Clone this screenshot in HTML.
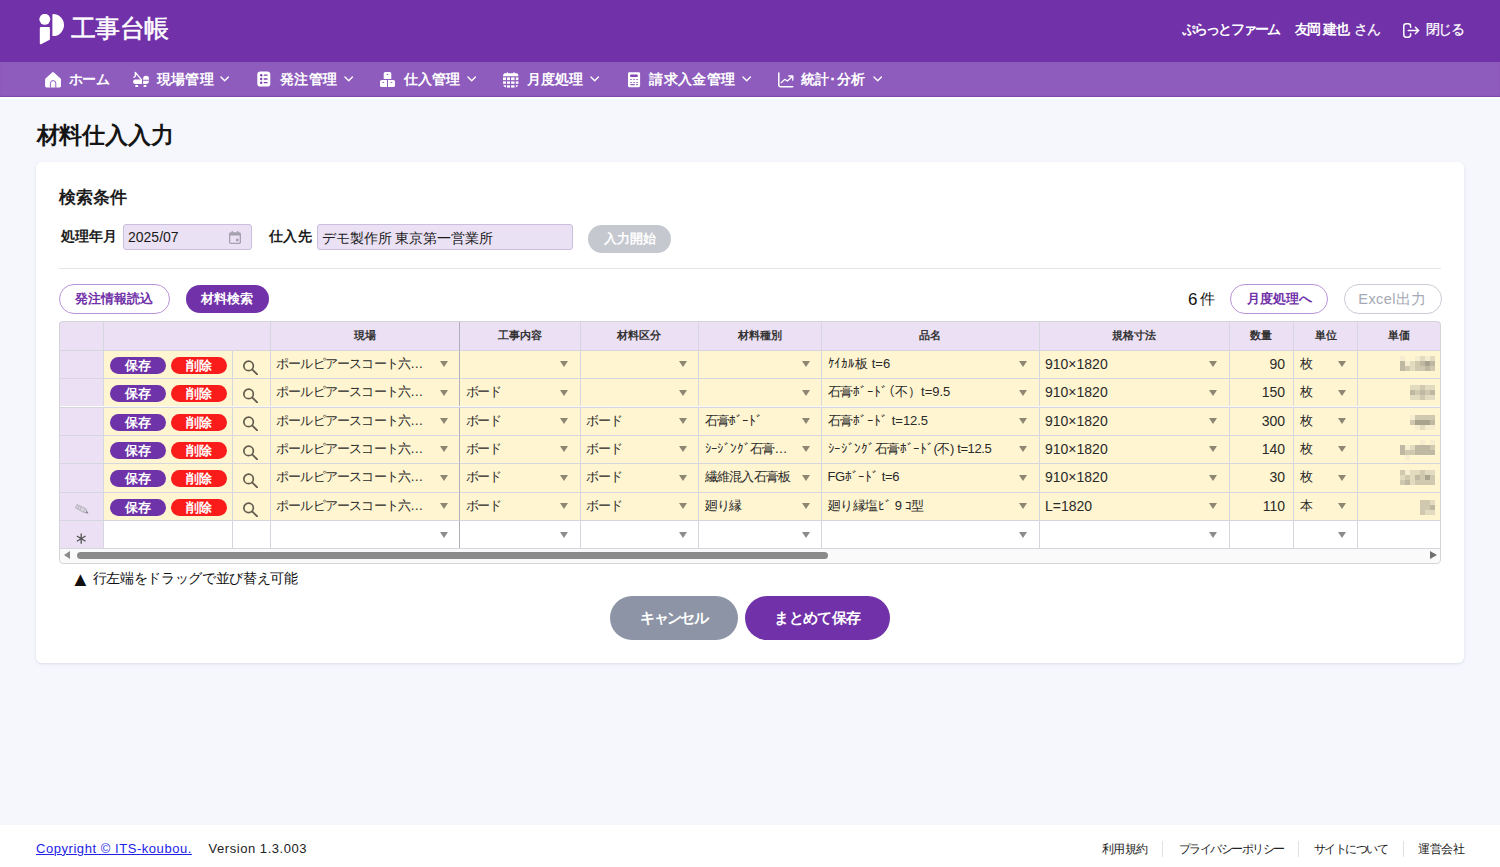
<!DOCTYPE html>
<html lang="ja">
<head>
<meta charset="utf-8">
<title>材料仕入入力</title>
<style>
*{box-sizing:border-box;margin:0;padding:0}
html,body{width:1500px;height:867px;overflow:hidden}
body{position:relative;background:#f5f7fc;color:#1a1a1a;font-family:"Liberation Sans",sans-serif;font-size:14px;line-height:1}
.abs{position:absolute;white-space:nowrap}
/* header */
#hdr{left:0;top:0;width:1500px;height:62px;background:#7131a9}
#logo{left:39px;top:14px;width:25px;height:31px}
#brand{left:70.5px;top:12.5px;width:98px;height:32px;line-height:32px;font-size:24.5px;font-weight:500;color:#fff;letter-spacing:-0.5px;-webkit-text-stroke:0.5px #fff}
.hr{color:#fff;font-size:13.5px;height:20px;line-height:20px;top:20px}
/* nav */
#nav{left:0;top:62px;width:1500px;height:34.6px;background:#8e5cbd;box-shadow:inset 0 -1.5px 1px -0.5px rgba(110,50,160,.55),0 1.6px 0 #fff}
.ni{top:62px;height:34px;line-height:34px;color:#fff;font-size:14px;font-weight:bold}
.j{text-align-last:justify}
.nic{top:71px;width:18px;height:18px}
.chev{top:75px;width:10px;height:8px}
/* page */
#ttl{left:36.5px;top:119px;width:137px;height:32px;line-height:32px;font-size:23px;font-weight:bold;color:#151515;letter-spacing:-0.4px}
#card{left:36px;top:162px;width:1428px;height:501px;background:#fff;border-radius:6px;box-shadow:0 1px 3px rgba(40,55,100,.13)}
#sec{left:59px;top:185px;width:68px;height:24px;line-height:24px;font-size:16.5px;font-weight:bold;color:#1c1c1c}
.lbl{top:224px;height:26px;line-height:25px;font-size:14px;font-weight:bold;color:#1c1c1c}
.inp{top:224px;height:26.2px;background:#ebe1f4;border:1px solid #cbbfdd;border-radius:3px;line-height:24px;font-size:14px;padding-left:4px;color:#1a1a1a}
.pill{border-radius:999px;text-align:center;font-weight:bold;font-size:14px}
#rule{left:59px;top:268px;width:1382px;height:1px;background:#e3e5ea}
/* grid */
#grid{left:59px;top:321px;width:1382px;height:242.6px;background:#fafafa;border-radius:4px;overflow:hidden}
#gb{position:absolute;left:0;top:0;right:0;bottom:0;border:1px solid #d3d3d8;border-radius:4px;pointer-events:none}
.row{position:absolute;left:0;width:1382px}
.c{position:absolute;top:0;height:100%;border-left:1px solid #d5d6de;border-top:1px solid #d5d6de;overflow:hidden;white-space:nowrap;font-size:14px;color:#1d1d1d}
.h .c{background:#ebe0f4;text-align:center;font-weight:bold;font-size:11px;color:#333;line-height:28px;border-top:0}
.d .c{background:#fff5d1;line-height:26px;padding-left:5.5px;color:#2a2a2a}
.d .c.rh,.n .c.rh{background:#ebe0f4;padding:0}
.n .c{background:#fff}
.c.fz+.c{border-left-color:#b0b0b8}
.num{text-align:right;padding-right:8px}
.t{display:inline-block;vertical-align:top}
.k{font-size:13px;letter-spacing:-0.7px}
.ks{font-size:13px;letter-spacing:-1.2px}
.kw{font-size:13px;letter-spacing:-0.8px}
.k2{font-size:13px;letter-spacing:-0.05px}
.k3{font-size:13px;letter-spacing:-0.4px}
.tri{position:absolute;right:11.2px;top:10.6px;width:0;height:0;border-left:4.5px solid transparent;border-right:4.5px solid transparent;border-top:6.2px solid #8d8672}
.n .tri{border-top-color:#8c8c8c}
.bs,.bd{position:absolute;top:6px;height:17px;line-height:17px;border-radius:9px;color:#fff;font-size:13px;font-weight:bold;text-align:center;width:56.5px}
.bs{left:6px;background:#6e33a8}
.bd{left:67.1px;background:#fa1b1b}
.mag{position:absolute;left:9.5px;top:8.9px;width:16px;height:15px}
.pen{position:absolute;left:14.5px;top:11.7px;width:14px;height:10px}
.ast{position:absolute;left:16.3px;top:11.5px;width:10.4px;height:11.3px}
.sb{background:#fafafa;border-top:1px solid #d5d6de}
.sl,.sr{position:absolute;top:2.6px;width:0;height:0;border-top:4.4px solid transparent;border-bottom:4.4px solid transparent}
.sl{left:4.5px;border-right:6.5px solid #8b8b8b}
.sr{right:4.5px;border-left:7px solid #707070}
.th{position:absolute;left:17.5px;top:3px;width:751px;height:7.5px;border-radius:4px;background:#8b8b8b}
.mz{position:absolute;right:6px;top:9px;height:13px;background:#cfc8b4;opacity:.8}
.m0{width:36px}.m1{width:26px}.m2{width:26px}.m3{width:36px}.m4{width:36px}.m5{width:16px}
/* footer */
#ftr{left:0;top:825px;width:1500px;height:42px;background:#fff}
.ft{top:840px;height:18px;line-height:18px;font-size:11.5px;color:#222}
.ft.j{letter-spacing:-0.6px}
.fs{top:841px;width:1px;height:16px;background:#dfe1e6}
</style>
</head>
<body>
<div id="hdr" class="abs"></div>
<svg id="logo" class="abs" viewBox="0 0 25 31"><g fill="#fff"><circle cx="5.8" cy="5.3" r="5.45"/><path d="M1.9 13.1H9.8a1.1 1.1 0 0 1 1.1 1.1V24.9a1.3 1.3 0 0 1-.7 1.1L2.5 30.1a1.1 1.1 0 0 1-1.7-.9V14.2a1.1 1.1 0 0 1 1.1-1.1Z"/><path d="M14 0.1A11 11 0 0 1 14 22.1a.6.6 0 0 1-.6-.6V.7a.6.6 0 0 1 .6-.6Z"/></g></svg>
<div id="brand" class="abs j">工事台帳</div>
<div class="abs hr j" style="left:1181.5px;width:98px;font-weight:bold;letter-spacing:-1.85px">ぷらっとファーム</div>
<div class="abs hr j" style="left:1294.5px;width:54px;font-weight:bold;letter-spacing:-1.6px">友岡 建也</div>
<div class="abs hr j" style="left:1353.5px;width:26px;letter-spacing:-0.6px;-webkit-text-stroke:.25px #fff">さん</div>
<svg class="abs" style="left:1402.6px;top:23px;width:17px;height:15px" viewBox="0 0 17 15" fill="none" stroke="#fff" stroke-width="1.5" stroke-linecap="round" stroke-linejoin="round"><path d="M7.6 4.2V3.2A2.4 2.4 0 0 0 5.2 .8H3.2A2.4 2.4 0 0 0 .8 3.2V11.8A2.4 2.4 0 0 0 3.2 14.2H5.2A2.4 2.4 0 0 0 7.6 11.8V10.8"/><path d="M5.2 7.5H15.6M12.4 4.3L15.6 7.5L12.4 10.7"/></svg>
<div class="abs hr j" style="left:1425.5px;width:38px;letter-spacing:-1.1px;-webkit-text-stroke:.25px #fff">閉じる</div>
<div id="nav" class="abs"></div>
<svg class="abs" style="left:44px;top:71px;width:18px;height:17px" viewBox="0 0 18 17"><path fill="#fff" stroke="#fff" stroke-width="2.6" stroke-linejoin="round" d="M9 2.4L15.7 8.5V15.1H2.4V8.5Z"/><path fill="none" stroke="#8e5cbd" stroke-width="1" d="M6.4 16.6V12.3a2.7 2.7 0 0 1 5.4 0V16.6"/></svg>
<div class="abs ni j" style="left:68.5px;width:40.5px;letter-spacing:-0.9px">ホーム</div>
<svg class="abs" style="left:133px;top:71px;width:17px;height:17px" viewBox="0 0 17 17"><g fill="none" stroke="#fff" stroke-width="1.3" stroke-linecap="round" stroke-linejoin="round"><path d="M.9 6.3L2.4 5.2L2.3 1.3L8.6 8.8"/></g><g fill="#fff"><path d="M2.3 8.5H9V13H2.3A2.2 2.2 0 0 1 2.3 8.5Z"/><path d="M10.1 8.7V7.7A2.950 2.950 0 0 1 16 7.7V8.7Z"/><path d="M10.1 9.8H16V10.1A2.950 2.950 0 0 1 13 13H10.1Z"/><rect x="2.2" y="14.1" width="3" height="2" rx=".9"/><rect x="10.5" y="14.1" width="3" height="2" rx=".9"/></g></svg>
<div class="abs ni j" style="left:156.8px;width:57px">現場管理</div>
<svg class="abs" style="left:219.5px;top:76.3px;width:9.4px;height:5.6px" viewBox="0 0 10 6" fill="none" stroke="#fff" stroke-width="1.5" stroke-linecap="round" stroke-linejoin="round"><path d="M1 1L5 5L9 1"/></svg>
<svg class="abs" style="left:257.1px;top:71.1px;width:14px;height:16px" viewBox="0 0 14 16"><rect x=".3" y=".4" width="13" height="15.2" rx="3.2" fill="#fff"/><g fill="#7a3fb0"><circle cx="4.2" cy="4.2" r="1.2"/><rect x="6.7" y="3.55" width="3.9" height="1.3" rx=".4"/><circle cx="4.2" cy="8" r="1.2"/><rect x="6.7" y="7.35" width="3.9" height="1.3" rx=".4"/><circle cx="4.2" cy="11.7" r="1.2"/><rect x="6.7" y="11.05" width="3.9" height="1.3" rx=".4"/></g></svg>
<div class="abs ni j" style="left:279.6px;width:57.6px">発注管理</div>
<svg class="abs" style="left:343.5px;top:76.3px;width:9.4px;height:5.6px" viewBox="0 0 10 6" fill="none" stroke="#fff" stroke-width="1.5" stroke-linecap="round" stroke-linejoin="round"><path d="M1 1L5 5L9 1"/></svg>
<svg class="abs" style="left:380px;top:72px;width:16px;height:16px" viewBox="0 0 16 16"><g fill="#fff"><path d="M5.2 0H9.8A1.5 1.5 0 0 1 11.3 1.5V6.9H3.7V1.5A1.5 1.5 0 0 1 5.2 0Z"/><path d="M1.6 8H7V15.1H1.6A1.6 1.6 0 0 1 0 13.5V9.6A1.6 1.6 0 0 1 1.6 8Z"/><path d="M8 8H13.4A1.6 1.6 0 0 1 15 9.6V13.5A1.6 1.6 0 0 1 13.4 15.1H8Z"/></g><g fill="#8e5cbd"><ellipse cx="7.5" cy="2.5" rx="1" ry=".5"/><ellipse cx="3.3" cy="10.6" rx="1" ry=".5"/><ellipse cx="11.4" cy="10.6" rx="1" ry=".5"/></g></svg>
<div class="abs ni j" style="left:403.6px;width:56.2px">仕入管理</div>
<svg class="abs" style="left:466.5px;top:76.3px;width:9.4px;height:5.6px" viewBox="0 0 10 6" fill="none" stroke="#fff" stroke-width="1.5" stroke-linecap="round" stroke-linejoin="round"><path d="M1 1L5 5L9 1"/></svg>
<svg class="abs" style="left:503px;top:71.5px;width:16px;height:16px" viewBox="0 0 16 16"><g fill="#fff"><rect x="3.7" y=".2" width="1.4" height="2" rx=".6"/><rect x="10.3" y=".2" width="1.4" height="2" rx=".6"/><path d="M0 4.3V4A3.6 3.6 0 0 1 1.22 1.3H14.18A3.6 3.6 0 0 1 15.4 4V4.3Z"/><rect x="0" y="5.4" width="3" height="2.7"/><rect x="4" y="5.4" width="3" height="2.7"/><rect x="8.1" y="5.4" width="3.4" height="2.7"/><rect x="12.8" y="5.4" width="2.6" height="2.7"/><rect x="0" y="9.4" width="3" height="2.4"/><rect x="4" y="9.4" width="3" height="2.4"/><rect x="8.1" y="9.4" width="3.4" height="2.4"/><rect x="12.8" y="9.4" width="2.6" height="2.4"/><path d="M.24 13.3H3V15.55A3.6 3.6 0 0 1 .24 13.3Z"/><rect x="4" y="13.3" width="3" height="2.3"/><rect x="8.1" y="13.3" width="3.4" height="2.3"/><path d="M12.8 13.3H15.16A3.6 3.6 0 0 1 12.8 15.46Z"/></g></svg>
<div class="abs ni j" style="left:527.1px;width:56.2px">月度処理</div>
<svg class="abs" style="left:589.5px;top:76.3px;width:9.4px;height:5.6px" viewBox="0 0 10 6" fill="none" stroke="#fff" stroke-width="1.5" stroke-linecap="round" stroke-linejoin="round"><path d="M1 1L5 5L9 1"/></svg>
<svg class="abs" style="left:628px;top:72px;width:13px;height:16px" viewBox="0 0 13 16"><rect x="0" y=".15" width="12.1" height="15" rx="1.3" fill="#fff"/><g fill="#8448b6"><rect x="2.2" y="2.6" width="7.5" height="2.3" rx=".5"/></g><g fill="#9a6cc6"><rect x="2.2" y="7" width="1.7" height="1.1" rx=".3"/><rect x="5.2" y="7" width="1.7" height="1.1" rx=".3"/><rect x="8.2" y="7" width="1.7" height="1.1" rx=".3"/><rect x="2.2" y="9.9" width="1.7" height="1.1" rx=".3"/><rect x="5.2" y="9.9" width="1.7" height="1.1" rx=".3"/><rect x="8.2" y="9.9" width="1.7" height="1.1" rx=".3"/></g><g fill="#8e5cbd"><rect x="2.2" y="12.1" width="4.7" height="1.1" rx=".4"/><rect x="8.2" y="12.1" width="1.7" height="1.1" rx=".3"/></g></svg>
<div class="abs ni j" style="left:649.2px;width:85.8px">請求入金管理</div>
<svg class="abs" style="left:741.5px;top:76.3px;width:9.4px;height:5.6px" viewBox="0 0 10 6" fill="none" stroke="#fff" stroke-width="1.5" stroke-linecap="round" stroke-linejoin="round"><path d="M1 1L5 5L9 1"/></svg>
<svg class="abs" style="left:778px;top:71.5px;width:16px;height:16px" viewBox="0 0 16 16" fill="none" stroke="#fff" stroke-linecap="round" stroke-linejoin="round"><path stroke-width="1.5" d="M.8 .9V12.9a1.8 1.8 0 0 0 1.8 1.8H14.7"/><path stroke-width="1.3" d="M3.2 10.8L6.7 7.4L9.4 9L14.3 4.5M10.8 4H14.8V8.2"/></svg>
<div class="abs ni j" style="left:801.1px;width:63.8px">統計･分析</div>
<svg class="abs" style="left:872.5px;top:76.3px;width:9.4px;height:5.6px" viewBox="0 0 10 6" fill="none" stroke="#fff" stroke-width="1.5" stroke-linecap="round" stroke-linejoin="round"><path d="M1 1L5 5L9 1"/></svg>
<div id="ttl" class="abs j">材料仕入入力</div>
<div id="card" class="abs"></div>
<div id="sec" class="abs j">検索条件</div>
<div class="abs lbl j" style="left:60.5px;width:56px">処理年月</div>
<div class="abs inp" style="left:123px;width:129px">2025/07<svg style="position:absolute;left:105px;top:6px;width:12px;height:13px" viewBox="0 0 12 13"><path fill="#a5a0ad" d="M2.6 0h1.3v1.3h4.2V0h1.3v1.3h.9A1.7 1.7 0 0 1 12 3v8.3A1.7 1.7 0 0 1 10.3 13H1.7A1.7 1.7 0 0 1 0 11.3V3A1.7 1.7 0 0 1 1.7 1.3h.9ZM1.3 4.6v6.5a.6.6 0 0 0 .6.6h8.2a.6.6 0 0 0 .6-.6V4.6ZM7 7.7h2.6v2.6H7Z"/></svg></div>
<div class="abs lbl j" style="left:268.5px;width:43px">仕入先</div>
<div class="abs inp" style="left:316.5px;width:256px;font-size:14px;line-height:27px">デモ製作所 東京第一営業所</div>
<div class="abs pill" style="left:588px;top:224.5px;width:83px;height:28px;line-height:28px;background:#c5c8cf;color:#fff;font-size:13px">入力開始</div>
<div id="rule" class="abs"></div>
<div class="abs pill" style="left:58.5px;top:283.5px;width:111.5px;height:30px;line-height:28px;border:1px solid #b794d8;color:#7131a9;font-size:13px;background:#fff">発注情報読込</div>
<div class="abs pill" style="left:185.5px;top:284.5px;width:83px;height:28px;line-height:28px;background:#7131a9;color:#fff;font-size:13px">材料検索</div>
<div class="abs" style="left:1188px;top:289px;height:20px;line-height:20px;font-size:17px;color:#111">6<span style="font-size:14.5px;margin-left:2.5px;vertical-align:.5px">件</span></div>
<div class="abs pill" style="left:1230px;top:283.5px;width:98px;height:30px;line-height:28px;border:1px solid #b794d8;color:#7131a9;font-size:13px;background:#fff">月度処理へ</div>
<div class="abs pill" style="left:1343.5px;top:283.5px;width:98px;height:30px;line-height:28px;border:1px solid #c9ccd4;color:#a4a9b4;font-size:14.5px;background:#fff;font-weight:normal;letter-spacing:.4px">Excel出力</div>
<div id="grid" class="abs">
<div class="row h" style="top:0;height:28.7px"><div class="c " style="left:0px;width:44px"></div><div class="c " style="left:43.5px;width:167px"></div><div class="c fz" style="left:210.5px;width:189.5px">現場</div><div class="c " style="left:400px;width:120.5px">工事内容</div><div class="c " style="left:520.5px;width:118.5px">材料区分</div><div class="c " style="left:639px;width:123px">材料種別</div><div class="c " style="left:762px;width:217.5px">品名</div><div class="c " style="left:979.5px;width:190px">規格寸法</div><div class="c " style="left:1169.5px;width:64.5px">数量</div><div class="c " style="left:1234px;width:64px">単位</div><div class="c " style="left:1298px;width:83.5px">単価</div></div>
<div class="row d" style="top:28.7px;height:28.4px"><div class="c rh" style="left:0px;width:44px"></div><div class="c " style="left:43.5px;width:129px"><b class="bs">保存</b><b class="bd">削除</b></div><div class="c " style="left:172.5px;width:38px"><svg class="mag" viewBox="0 0 16 15"><circle cx="6.6" cy="5.9" r="4.75" fill="none" stroke="#625d4e" stroke-width="1.7"/><path d="M10.1 9.4L15.2 14.4" stroke="#625d4e" stroke-width="1.9" stroke-linecap="round"/></svg></div><div class="c fz" style="left:210.5px;width:189.5px"><span class="t kw">ポールピアースコート六…</span><i class="tri"></i></div><div class="c " style="left:400px;width:120.5px"><i class="tri"></i></div><div class="c " style="left:520.5px;width:118.5px"><i class="tri"></i></div><div class="c " style="left:639px;width:123px"><i class="tri"></i></div><div class="c " style="left:762px;width:217.5px"><span class="t k2">ｹｲｶﾙ板 t=6</span><i class="tri"></i></div><div class="c " style="left:979.5px;width:190px"><span class="t">910×1820</span><i class="tri"></i></div><div class="c num" style="left:1169.5px;width:64.5px">90</div><div class="c " style="left:1234px;width:64px"><span class="t k">枚</span><i class="tri"></i></div><div class="c px" style="left:1298px;width:83.5px"></div></div>
<div class="row d" style="top:57.1px;height:28.4px"><div class="c rh" style="left:0px;width:44px"></div><div class="c " style="left:43.5px;width:129px"><b class="bs">保存</b><b class="bd">削除</b></div><div class="c " style="left:172.5px;width:38px"><svg class="mag" viewBox="0 0 16 15"><circle cx="6.6" cy="5.9" r="4.75" fill="none" stroke="#625d4e" stroke-width="1.7"/><path d="M10.1 9.4L15.2 14.4" stroke="#625d4e" stroke-width="1.9" stroke-linecap="round"/></svg></div><div class="c fz" style="left:210.5px;width:189.5px"><span class="t kw">ポールピアースコート六…</span><i class="tri"></i></div><div class="c " style="left:400px;width:120.5px"><span class="t ks">ボード</span><i class="tri"></i></div><div class="c " style="left:520.5px;width:118.5px"><i class="tri"></i></div><div class="c " style="left:639px;width:123px"><i class="tri"></i></div><div class="c " style="left:762px;width:217.5px"><span class="t k2">石膏ﾎﾞｰﾄﾞ（不）t=9.5</span><i class="tri"></i></div><div class="c " style="left:979.5px;width:190px"><span class="t">910×1820</span><i class="tri"></i></div><div class="c num" style="left:1169.5px;width:64.5px">150</div><div class="c " style="left:1234px;width:64px"><span class="t k">枚</span><i class="tri"></i></div><div class="c px" style="left:1298px;width:83.5px"></div></div>
<div class="row d" style="top:85.5px;height:28.4px"><div class="c rh" style="left:0px;width:44px"></div><div class="c " style="left:43.5px;width:129px"><b class="bs">保存</b><b class="bd">削除</b></div><div class="c " style="left:172.5px;width:38px"><svg class="mag" viewBox="0 0 16 15"><circle cx="6.6" cy="5.9" r="4.75" fill="none" stroke="#625d4e" stroke-width="1.7"/><path d="M10.1 9.4L15.2 14.4" stroke="#625d4e" stroke-width="1.9" stroke-linecap="round"/></svg></div><div class="c fz" style="left:210.5px;width:189.5px"><span class="t kw">ポールピアースコート六…</span><i class="tri"></i></div><div class="c " style="left:400px;width:120.5px"><span class="t ks">ボード</span><i class="tri"></i></div><div class="c " style="left:520.5px;width:118.5px"><span class="t ks">ボード</span><i class="tri"></i></div><div class="c " style="left:639px;width:123px"><span class="t k">石膏ﾎﾞｰﾄﾞ</span><i class="tri"></i></div><div class="c " style="left:762px;width:217.5px"><span class="t k2">石膏ﾎﾞｰﾄﾞ t=12.5</span><i class="tri"></i></div><div class="c " style="left:979.5px;width:190px"><span class="t">910×1820</span><i class="tri"></i></div><div class="c num" style="left:1169.5px;width:64.5px">300</div><div class="c " style="left:1234px;width:64px"><span class="t k">枚</span><i class="tri"></i></div><div class="c px" style="left:1298px;width:83.5px"></div></div>
<div class="row d" style="top:113.9px;height:28.4px"><div class="c rh" style="left:0px;width:44px"></div><div class="c " style="left:43.5px;width:129px"><b class="bs">保存</b><b class="bd">削除</b></div><div class="c " style="left:172.5px;width:38px"><svg class="mag" viewBox="0 0 16 15"><circle cx="6.6" cy="5.9" r="4.75" fill="none" stroke="#625d4e" stroke-width="1.7"/><path d="M10.1 9.4L15.2 14.4" stroke="#625d4e" stroke-width="1.9" stroke-linecap="round"/></svg></div><div class="c fz" style="left:210.5px;width:189.5px"><span class="t kw">ポールピアースコート六…</span><i class="tri"></i></div><div class="c " style="left:400px;width:120.5px"><span class="t ks">ボード</span><i class="tri"></i></div><div class="c " style="left:520.5px;width:118.5px"><span class="t ks">ボード</span><i class="tri"></i></div><div class="c " style="left:639px;width:123px"><span class="t k">ｼｰｼﾞﾝｸﾞ石膏…</span><i class="tri"></i></div><div class="c " style="left:762px;width:217.5px"><span class="t k3">ｼｰｼﾞﾝｸﾞ石膏ﾎﾞｰﾄﾞ(不) t=12.5</span><i class="tri"></i></div><div class="c " style="left:979.5px;width:190px"><span class="t">910×1820</span><i class="tri"></i></div><div class="c num" style="left:1169.5px;width:64.5px">140</div><div class="c " style="left:1234px;width:64px"><span class="t k">枚</span><i class="tri"></i></div><div class="c px" style="left:1298px;width:83.5px"></div></div>
<div class="row d" style="top:142.3px;height:28.4px"><div class="c rh" style="left:0px;width:44px"></div><div class="c " style="left:43.5px;width:129px"><b class="bs">保存</b><b class="bd">削除</b></div><div class="c " style="left:172.5px;width:38px"><svg class="mag" viewBox="0 0 16 15"><circle cx="6.6" cy="5.9" r="4.75" fill="none" stroke="#625d4e" stroke-width="1.7"/><path d="M10.1 9.4L15.2 14.4" stroke="#625d4e" stroke-width="1.9" stroke-linecap="round"/></svg></div><div class="c fz" style="left:210.5px;width:189.5px"><span class="t kw">ポールピアースコート六…</span><i class="tri"></i></div><div class="c " style="left:400px;width:120.5px"><span class="t ks">ボード</span><i class="tri"></i></div><div class="c " style="left:520.5px;width:118.5px"><span class="t ks">ボード</span><i class="tri"></i></div><div class="c " style="left:639px;width:123px"><span class="t k">繊維混入石膏板</span><i class="tri"></i></div><div class="c " style="left:762px;width:217.5px"><span class="t k3">FGﾎﾞｰﾄﾞ t=6</span><i class="tri"></i></div><div class="c " style="left:979.5px;width:190px"><span class="t">910×1820</span><i class="tri"></i></div><div class="c num" style="left:1169.5px;width:64.5px">30</div><div class="c " style="left:1234px;width:64px"><span class="t k">枚</span><i class="tri"></i></div><div class="c px" style="left:1298px;width:83.5px"></div></div>
<div class="row d" style="top:170.7px;height:28.4px"><div class="c rh" style="left:0px;width:44px"><svg class="pen" viewBox="0 0 14 10"><path d="M2 .5L10.6 4.6L13 9.3L8.3 8.2L.5 3.7Z" fill="#d9d4df" stroke="#aaa6b1" stroke-width=".8" stroke-linejoin="round"/><path d="M4.2 1.6L2.7 4.9M6.4 2.7L4.9 6.1M10.6 4.6L8.3 8.2" stroke="#aaa6b1" stroke-width=".7"/><path d="M13 9.3L11.8 7L10.7 8.8Z" fill="#77747c"/></svg></div><div class="c " style="left:43.5px;width:129px"><b class="bs">保存</b><b class="bd">削除</b></div><div class="c " style="left:172.5px;width:38px"><svg class="mag" viewBox="0 0 16 15"><circle cx="6.6" cy="5.9" r="4.75" fill="none" stroke="#625d4e" stroke-width="1.7"/><path d="M10.1 9.4L15.2 14.4" stroke="#625d4e" stroke-width="1.9" stroke-linecap="round"/></svg></div><div class="c fz" style="left:210.5px;width:189.5px"><span class="t kw">ポールピアースコート六…</span><i class="tri"></i></div><div class="c " style="left:400px;width:120.5px"><span class="t ks">ボード</span><i class="tri"></i></div><div class="c " style="left:520.5px;width:118.5px"><span class="t ks">ボード</span><i class="tri"></i></div><div class="c " style="left:639px;width:123px"><span class="t k">廻り縁</span><i class="tri"></i></div><div class="c " style="left:762px;width:217.5px"><span class="t k3">廻り縁塩ﾋﾞ 9 ｺ型</span><i class="tri"></i></div><div class="c " style="left:979.5px;width:190px"><span class="t">L=1820</span><i class="tri"></i></div><div class="c num" style="left:1169.5px;width:64.5px">110</div><div class="c " style="left:1234px;width:64px"><span class="t k">本</span><i class="tri"></i></div><div class="c px" style="left:1298px;width:83.5px"></div></div>
<div class="row n" style="top:199.1px;height:28.4px"><div class="c rh" style="left:0px;width:44px"><svg class="ast" viewBox="0 0 11 12"><path d="M5.5 .6V11.4M.9 3.2L10.1 8.8M10.1 3.2L.9 8.8" stroke="#555" stroke-width="1.4" fill="none"/></svg></div><div class="c " style="left:43.5px;width:129px"></div><div class="c " style="left:172.5px;width:38px"></div><div class="c fz" style="left:210.5px;width:189.5px"><i class="tri"></i></div><div class="c " style="left:400px;width:120.5px"><i class="tri"></i></div><div class="c " style="left:520.5px;width:118.5px"><i class="tri"></i></div><div class="c " style="left:639px;width:123px"><i class="tri"></i></div><div class="c " style="left:762px;width:217.5px"><i class="tri"></i></div><div class="c " style="left:979.5px;width:190px"><i class="tri"></i></div><div class="c " style="left:1169.5px;width:64.5px"></div><div class="c " style="left:1234px;width:64px"><i class="tri"></i></div><div class="c " style="left:1298px;width:83.5px"></div></div>
<div class="row sb" style="top:226.9px;height:15.6px"><i class="sl"></i><i class="th"></i><i class="sr"></i></div>
<svg class="mos" style="position:absolute;left:1336px;top:29px;width:45px;height:170px" viewBox="0 0 45 170" shape-rendering="crispEdges"><rect x="5" y="6" width="5" height="5" fill="#f6edd0"/><rect x="20" y="6" width="5" height="5" fill="#f6edd0"/><rect x="25" y="6" width="5" height="5" fill="#e3dbc0"/><rect x="30" y="6" width="5" height="5" fill="#f6edd0"/><rect x="35" y="6" width="5" height="5" fill="#e3dbc0"/><rect x="5" y="11" width="5" height="5" fill="#bfb8a2"/><rect x="10" y="11" width="5" height="5" fill="#f6edd0"/><rect x="15" y="11" width="5" height="5" fill="#e3dbc0"/><rect x="20" y="11" width="5" height="5" fill="#d0c9b0"/><rect x="25" y="11" width="5" height="5" fill="#bfb8a2"/><rect x="30" y="11" width="5" height="5" fill="#a9a38e"/><rect x="35" y="11" width="5" height="5" fill="#bfb8a2"/><rect x="5" y="16" width="5" height="5" fill="#bfb8a2"/><rect x="10" y="16" width="5" height="5" fill="#d0c9b0"/><rect x="15" y="16" width="5" height="5" fill="#e3dbc0"/><rect x="20" y="16" width="5" height="5" fill="#d0c9b0"/><rect x="25" y="16" width="5" height="5" fill="#d0c9b0"/><rect x="30" y="16" width="5" height="5" fill="#bfb8a2"/><rect x="35" y="16" width="5" height="5" fill="#d0c9b0"/><rect x="15" y="35" width="5" height="5" fill="#e3dbc0"/><rect x="20" y="35" width="5" height="5" fill="#e3dbc0"/><rect x="25" y="35" width="5" height="5" fill="#d0c9b0"/><rect x="30" y="35" width="5" height="5" fill="#e3dbc0"/><rect x="35" y="35" width="5" height="5" fill="#e3dbc0"/><rect x="15" y="40" width="5" height="5" fill="#bfb8a2"/><rect x="20" y="40" width="5" height="5" fill="#d0c9b0"/><rect x="25" y="40" width="5" height="5" fill="#bfb8a2"/><rect x="30" y="40" width="5" height="5" fill="#d0c9b0"/><rect x="35" y="40" width="5" height="5" fill="#bfb8a2"/><rect x="15" y="45" width="5" height="5" fill="#e3dbc0"/><rect x="20" y="45" width="5" height="5" fill="#e3dbc0"/><rect x="25" y="45" width="5" height="5" fill="#d0c9b0"/><rect x="30" y="45" width="5" height="5" fill="#e3dbc0"/><rect x="35" y="45" width="5" height="5" fill="#e3dbc0"/><rect x="15" y="65" width="5" height="5" fill="#f6edd0"/><rect x="20" y="65" width="5" height="5" fill="#d0c9b0"/><rect x="25" y="65" width="5" height="5" fill="#d0c9b0"/><rect x="30" y="65" width="5" height="5" fill="#d0c9b0"/><rect x="35" y="65" width="5" height="5" fill="#d0c9b0"/><rect x="15" y="70" width="5" height="5" fill="#d0c9b0"/><rect x="20" y="70" width="5" height="5" fill="#a9a38e"/><rect x="25" y="70" width="5" height="5" fill="#a9a38e"/><rect x="30" y="70" width="5" height="5" fill="#a9a38e"/><rect x="35" y="70" width="5" height="5" fill="#bfb8a2"/><rect x="20" y="75" width="5" height="5" fill="#f6edd0"/><rect x="25" y="75" width="5" height="5" fill="#e3dbc0"/><rect x="30" y="75" width="5" height="5" fill="#f6edd0"/><rect x="35" y="75" width="5" height="5" fill="#f6edd0"/><rect x="25" y="89.5" width="5" height="5" fill="#f6edd0"/><rect x="35" y="89.5" width="5" height="5" fill="#f6edd0"/><rect x="5" y="94.5" width="5" height="5" fill="#bfb8a2"/><rect x="10" y="94.5" width="5" height="5" fill="#f6edd0"/><rect x="15" y="94.5" width="5" height="5" fill="#e3dbc0"/><rect x="20" y="94.5" width="5" height="5" fill="#bfb8a2"/><rect x="25" y="94.5" width="5" height="5" fill="#bfb8a2"/><rect x="30" y="94.5" width="5" height="5" fill="#bfb8a2"/><rect x="35" y="94.5" width="5" height="5" fill="#d0c9b0"/><rect x="5" y="99.5" width="5" height="5" fill="#bfb8a2"/><rect x="10" y="99.5" width="5" height="5" fill="#d0c9b0"/><rect x="15" y="99.5" width="5" height="5" fill="#d0c9b0"/><rect x="20" y="99.5" width="5" height="5" fill="#bfb8a2"/><rect x="25" y="99.5" width="5" height="5" fill="#bfb8a2"/><rect x="30" y="99.5" width="5" height="5" fill="#bfb8a2"/><rect x="35" y="99.5" width="5" height="5" fill="#bfb8a2"/><rect x="10" y="104.5" width="5" height="5" fill="#f6edd0"/><rect x="5" y="120" width="5" height="5" fill="#d0c9b0"/><rect x="10" y="120" width="5" height="5" fill="#f6edd0"/><rect x="15" y="120" width="5" height="5" fill="#e3dbc0"/><rect x="20" y="120" width="5" height="5" fill="#e3dbc0"/><rect x="25" y="120" width="5" height="5" fill="#d0c9b0"/><rect x="30" y="120" width="5" height="5" fill="#e3dbc0"/><rect x="35" y="120" width="5" height="5" fill="#e3dbc0"/><rect x="5" y="125" width="5" height="5" fill="#e3dbc0"/><rect x="10" y="125" width="5" height="5" fill="#d0c9b0"/><rect x="15" y="125" width="5" height="5" fill="#e3dbc0"/><rect x="20" y="125" width="5" height="5" fill="#bfb8a2"/><rect x="25" y="125" width="5" height="5" fill="#d0c9b0"/><rect x="30" y="125" width="5" height="5" fill="#a9a38e"/><rect x="35" y="125" width="5" height="5" fill="#d0c9b0"/><rect x="5" y="130" width="5" height="5" fill="#d0c9b0"/><rect x="10" y="130" width="5" height="5" fill="#bfb8a2"/><rect x="15" y="130" width="5" height="5" fill="#e3dbc0"/><rect x="20" y="130" width="5" height="5" fill="#d0c9b0"/><rect x="25" y="130" width="5" height="5" fill="#d0c9b0"/><rect x="30" y="130" width="5" height="5" fill="#d0c9b0"/><rect x="35" y="130" width="5" height="5" fill="#d0c9b0"/><rect x="25" y="150" width="5" height="5" fill="#d0c9b0"/><rect x="30" y="150" width="5" height="5" fill="#d0c9b0"/><rect x="35" y="150" width="5" height="5" fill="#e3dbc0"/><rect x="25" y="155" width="5" height="5" fill="#d0c9b0"/><rect x="30" y="155" width="5" height="5" fill="#d0c9b0"/><rect x="35" y="155" width="5" height="5" fill="#bfb8a2"/><rect x="25" y="160" width="5" height="5" fill="#d0c9b0"/><rect x="30" y="160" width="5" height="5" fill="#e3dbc0"/><rect x="35" y="160" width="5" height="5" fill="#e3dbc0"/></svg>
<div id="gb"></div>
</div>
<div class="abs" style="left:70.5px;top:568.5px;height:20px;line-height:20px;font-size:20px;color:#111">▲</div>
<div class="abs j" style="left:92.5px;top:568.5px;width:205px;height:20px;line-height:20px;font-size:13.5px;color:#111;letter-spacing:-0.6px">行左端をドラッグで並び替え可能</div>
<div class="abs pill" style="left:610px;top:596px;width:127.5px;height:44px;line-height:44px;background:#8c94a5;color:#fff;font-size:14.5px;letter-spacing:-1.7px">キャンセル</div>
<div class="abs pill" style="left:745px;top:596px;width:145px;height:44px;line-height:44px;background:#7131a9;color:#fff;font-size:14.5px;letter-spacing:-0.6px">まとめて保存</div>
<div id="ftr" class="abs"></div>
<div class="abs ft" style="left:36px;font-size:13px;color:#2222e6;text-decoration:underline;text-underline-offset:1px;text-decoration-thickness:1px;letter-spacing:.55px" id="cpy">Copyright © ITS-koubou.</div>
<div class="abs ft" style="left:208.5px;font-size:13px;letter-spacing:.55px" id="ver">Version 1.3.003</div>
<div class="abs ft j" style="left:1101.5px;width:46px">利用規約</div>
<i class="abs fs" style="left:1162px"></i>
<div class="abs ft j" style="left:1178.5px;width:105px;letter-spacing:-1.6px">プライバシーポリシー</div>
<i class="abs fs" style="left:1298px"></i>
<div class="abs ft j" style="left:1314px;width:73px;letter-spacing:-1.6px">サイトについて</div>
<i class="abs fs" style="left:1402.5px"></i>
<div class="abs ft j" style="left:1418px;width:46px">運営会社</div>
</body>
</html>
